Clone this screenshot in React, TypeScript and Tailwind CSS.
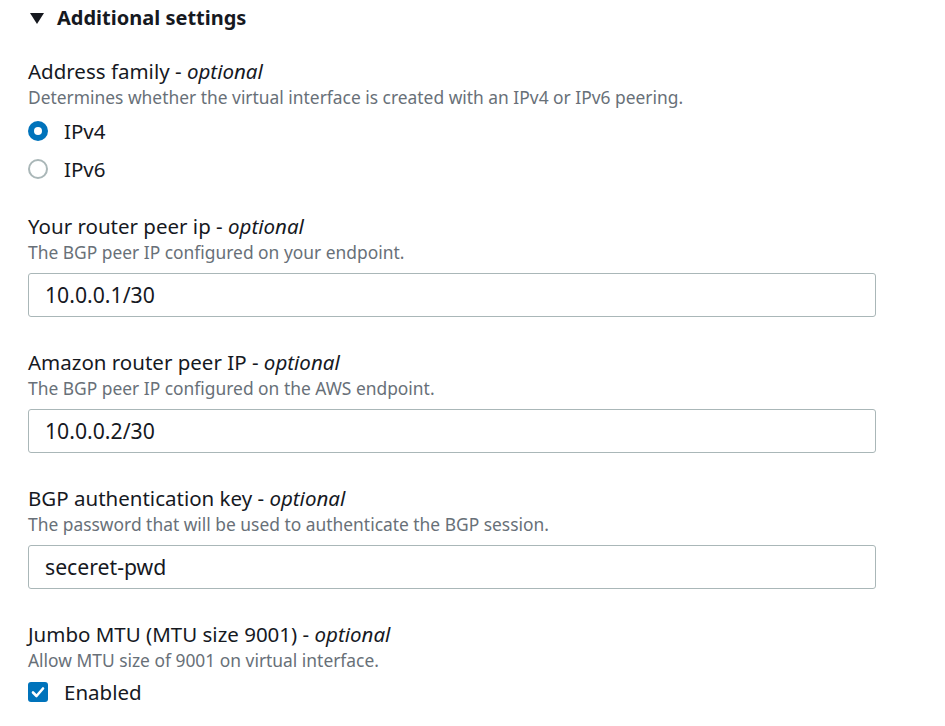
const font = { fontFamily: '"Noto Sans", "Open Sans", sans-serif' };

const Label = ({ text }: { text: string }) => (
  <div className="text-[20.5px] leading-[28px] text-[#16191f]">
    {text} - <i>optional</i>
  </div>
);

const Desc = ({ text }: { text: string }) => (
  <div className="text-[17.4px] leading-[22px] text-[#687078] mt-[1px]">{text}</div>
);

const Field = ({ label, desc, value }: { label: string; desc: string; value: string }) => (
  <div className="mt-[31px]">
    <Label text={label} />
    <Desc text={desc} />
    <div className="mt-[10px] w-[848px] h-[44px] border border-[#aab7b8] rounded-[3px] flex items-center px-[16px] text-[21.2px] text-[#16191f]">
      {value}
    </div>
  </div>
);

const App = () => (
  <div className="w-[945px] h-[726px] bg-white overflow-hidden pl-[28px] pt-[4px]" style={font}>
    {/* Section header */}
    <div className="flex items-center h-[28px]">
      <svg width="14" height="12" viewBox="0 0 14 12" className="ml-[2px]">
        <path d="M0 1 H14 L7 12 Z" fill="#16191f" />
      </svg>
      <span className="ml-[13px] text-[20px] font-bold text-[#16191f]">Additional settings</span>
    </div>

    {/* Address family */}
    <div className="mt-[25px]">
      <Label text="Address family" />
      <Desc text="Determines whether the virtual interface is created with an IPv4 or IPv6 peering." />
      <div className="mt-[11px] flex flex-col gap-[14px]">
        <label className="flex items-center h-[24px]">
          <span className="w-[20px] h-[20px] rounded-full bg-[#0073bb] flex items-center justify-center">
            <span className="w-[8px] h-[8px] rounded-full bg-white" />
          </span>
          <span className="ml-[16px] text-[20.5px] text-[#16191f]">IPv4</span>
        </label>
        <label className="flex items-center h-[24px]">
          <span className="w-[20px] h-[20px] rounded-full border-2 border-[#aab7b8] bg-white" />
          <span className="ml-[16px] text-[20.5px] text-[#16191f]">IPv6</span>
        </label>
      </div>
    </div>

    <div className="mt-[5px]">
      <Field label="Your router peer ip" desc="The BGP peer IP configured on your endpoint." value="10.0.0.1/30" />
    </div>
    <Field label="Amazon router peer IP" desc="The BGP peer IP configured on the AWS endpoint." value="10.0.0.2/30" />
    <Field label="BGP authentication key" desc="The password that will be used to authenticate the BGP session." value="seceret-pwd" />

    {/* Jumbo MTU */}
    <div className="mt-[31px]">
      <Label text="Jumbo MTU (MTU size 9001)" />
      <Desc text="Allow MTU size of 9001 on virtual interface." />
      <label className="mt-[9px] flex items-center h-[24px]">
        <span className="w-[20px] h-[20px] rounded-[3px] bg-[#0073bb] flex items-center justify-center">
          <svg width="14" height="12" viewBox="0 0 14 12">
            <path d="M2 6.5 L5.5 10 L12 2.5" stroke="white" strokeWidth="2.6" fill="none" strokeLinecap="round" strokeLinejoin="round" />
          </svg>
        </span>
        <span className="ml-[16px] text-[20.5px] text-[#16191f]">Enabled</span>
      </label>
    </div>
  </div>
);

export default App;
